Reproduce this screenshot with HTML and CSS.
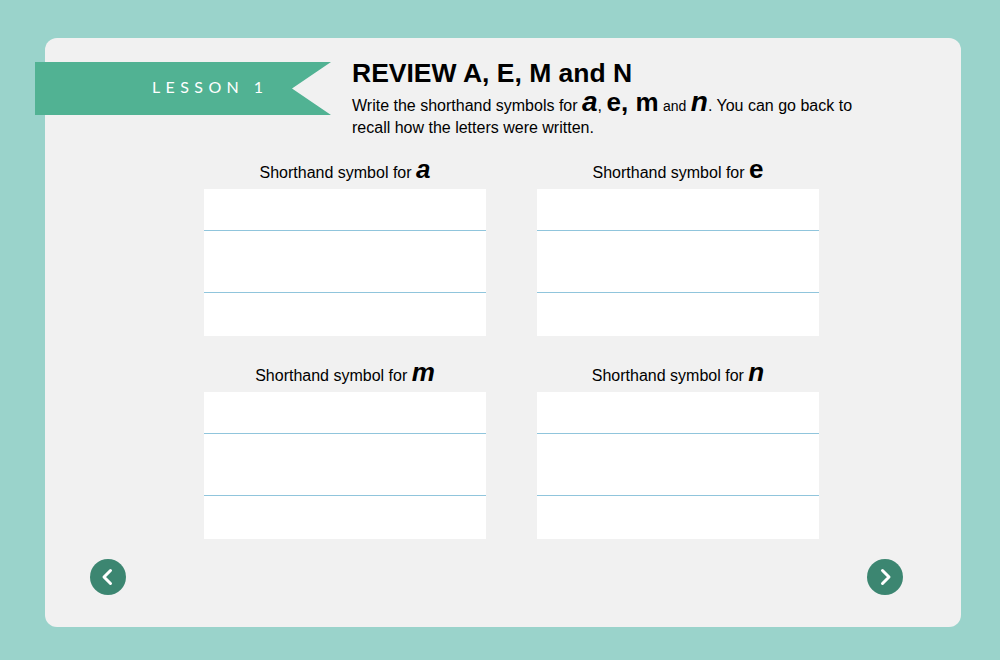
FILE: index.html
```html
<!DOCTYPE html>
<html lang="en">
<head>
  <meta charset="UTF-8" />
  <meta name="viewport" content="width=device-width, initial-scale=1.0"/>
  <title>Lesson 1 - Review A, E, M and N</title>
  <link rel="stylesheet" href="styles.css">
</head>
<body>
  <main class="card">
    <header class="lesson-head">
      <div class="ribbon">LESSON 1</div>
      <div class="intro">
        <h1>REVIEW A, E, M and N</h1>
        <p>Write the shorthand symbols for <span class="big it">a</span>, <span class="big">e, m</span> <span class="small">and</span> <span class="big it">n</span>. You can go back to recall how the letters were written.</p>
      </div>
    </header>

    <section class="practice">
      <div class="cell">
        <h2>Shorthand symbol for <span class="big it">a</span></h2>
        <div class="sheet"><div></div><div></div><div></div></div>
      </div>
      <div class="cell">
        <h2>Shorthand symbol for <span class="big">e</span></h2>
        <div class="sheet"><div></div><div></div><div></div></div>
      </div>
      <div class="cell">
        <h2>Shorthand symbol for <span class="big it">m</span></h2>
        <div class="sheet"><div></div><div></div><div></div></div>
      </div>
      <div class="cell">
        <h2>Shorthand symbol for <span class="big it">n</span></h2>
        <div class="sheet"><div></div><div></div><div></div></div>
      </div>
    </section>

    <nav class="pager">
      <button class="nav-btn" aria-label="Previous">
        <svg width="36" height="36" viewBox="0 0 36 36"><path d="M20.5 11.5 L14 18 L20.5 24.5" fill="none" stroke="#fff" stroke-width="3" stroke-linecap="round" stroke-linejoin="round"/></svg>
      </button>
      <button class="nav-btn" aria-label="Next">
        <svg width="36" height="36" viewBox="0 0 36 36"><path d="M15.5 11.5 L22 18 L15.5 24.5" fill="none" stroke="#fff" stroke-width="3" stroke-linecap="round" stroke-linejoin="round"/></svg>
      </button>
    </nav>
  </main>
</body>
</html>
```

FILE: styles.css
```css
body {
  margin: 0;
  font-family: 'Liberation Sans', Arial, sans-serif;
  background: #9ad3cb;
  color: #000;
}

.card {
  box-sizing: border-box;
  width: 916px;
  height: 589px;
  margin: 38px 0 0 45px;
  background: #f1f1f1;
  border-radius: 12px;
  display: flex;
  flex-direction: column;
}

.lesson-head {
  display: flex;
  align-items: flex-start;
}

.ribbon {
  box-sizing: border-box;
  width: 296px;
  height: 53px;
  margin: 24px 0 0 -10px;
  padding-left: 117px;
  background: #51b293;
  clip-path: polygon(0 0, 100% 0, 257px 50%, 100% 100%, 0 100%);
  color: #fff;
  font-family: Lato, 'Open Sans', sans-serif;
  font-size: 16px;
  letter-spacing: 5.4px;
  line-height: 50px;
}

.intro {
  margin: 20px 0 0 21px;
}

.intro h1 {
  margin: 0;
  font-size: 26.5px;
  line-height: 30px;
  font-weight: bold;
}

.intro p {
  margin: 7px 0 0;
  width: 510px;
  font-size: 16px;
  line-height: 22px;
}

.big {
  font-size: 26px;
  font-weight: bold;
  line-height: 0;
}

.intro .big.it {
  font-size: 28px;
}

.it {
  font-style: italic;
}

.small {
  font-size: 14px;
}

.practice {
  display: grid;
  grid-template-columns: 282px 282px;
  column-gap: 51px;
  row-gap: 26px;
  margin: 20px 0 0 159px;
}

.cell h2 {
  margin: 0 0 4px;
  height: 26px;
  font-size: 16px;
  font-weight: normal;
  line-height: 27px;
  text-align: center;
}

.sheet {
  display: flex;
  flex-direction: column;
  height: 147px;
  background: #fff;
}

.sheet div:nth-child(1) {
  height: 41px;
  border-bottom: 1px solid #90c5dc;
}

.sheet div:nth-child(2) {
  height: 61px;
  border-bottom: 1px solid #90c5dc;
}

.sheet div:nth-child(3) {
  height: 43px;
}

.pager {
  display: flex;
  justify-content: space-between;
  padding: 0 58px 0 45px;
  margin-top: 20px;
}

.nav-btn {
  width: 36px;
  height: 36px;
  padding: 0;
  border: none;
  border-radius: 50%;
  background: #3c8671;
  cursor: pointer;
}

.nav-btn svg {
  display: block;
}
```
